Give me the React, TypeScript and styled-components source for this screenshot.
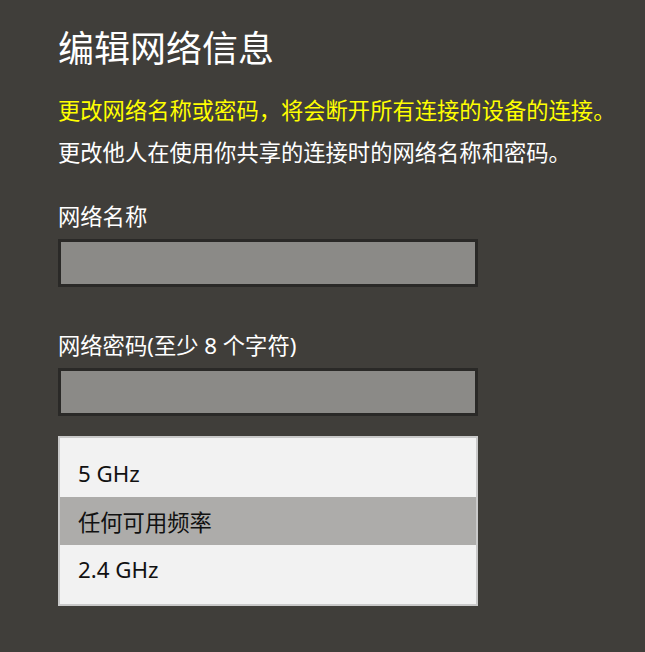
import React from 'react'
import styled, {createGlobalStyle} from 'styled-components'

const GlobalStyle = createGlobalStyle`
  html, body {
    margin: 0;
    padding: 0;
    background: #403e3a;
  }
  * {
    box-sizing: border-box;
  }
`

const Page = styled.div`
  min-height: 652px;
  background: #403e3a;
  padding: 25px 0 0 58px;
  font-family: "Noto Sans", "Noto Sans CJK SC", sans-serif;
  color: #ffffff;
`

const Title = styled.h1`
  margin: 0 0 17px;
  font-size: 36px;
  font-weight: 400;
  line-height: 48px;
`

const Note = styled.p<{warn?: boolean}>`
  margin: 0;
  font-size: 22.3px;
  line-height: 42px;
  color: ${p => (p.warn ? '#ffff00' : '#ffffff')};
`

const Field = styled.div<{top: number}>`
  display: flex;
  flex-direction: column;
  gap: 6px;
  margin-top: ${p => p.top}px;
`

const Label = styled.label`
  font-size: 22.3px;
  line-height: 32px;
`

const TextBox = styled.div`
  width: 420px;
  height: 48px;
  background: #8b8a87;
  border: 3px solid #2a2927;
`

const Menu = styled.ul`
  list-style: none;
  width: 420px;
  margin: 20px 0 0;
  padding: 11px 0;
  background: #f2f2f2;
  border: 2px solid #c9c9c9;
`

const MenuItem = styled.li<{selected?: boolean}>`
  height: 48px;
  display: flex;
  align-items: center;
  padding-left: 18px;
  font-size: 22.3px;
  color: #111111;
  background: ${p => (p.selected ? '#adacaa' : 'transparent')};
`

const bands = ['5 GHz', '任何可用频率', '2.4 GHz']

export default function App() {
  return (
    <Page>
      <GlobalStyle/>
      <Title>编辑网络信息</Title>
      <Note warn>更改网络名称或密码，将会断开所有连接的设备的连接。</Note>
      <Note>更改他人在使用你共享的连接时的网络名称和密码。</Note>
      <Field top={27}>
        <Label>网络名称</Label>
        <TextBox/>
      </Field>
      <Field top={43}>
        <Label>网络密码(至少 8 个字符)</Label>
        <TextBox/>
      </Field>
      <Menu>
        {bands.map(item => (
          <MenuItem key={item} selected={item === '任何可用频率'}>{item}</MenuItem>
        ))}
      </Menu>
    </Page>
  )
}
